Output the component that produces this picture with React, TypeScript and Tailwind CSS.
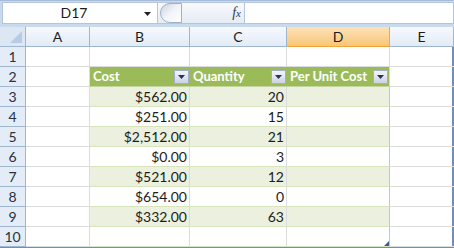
import React from "react";

const cols = ["A", "B", "C", "D", "E"];

const rows: { cost?: string; qty?: string }[] = [
  {},
  {},
  { cost: "$562.00", qty: "20" },
  { cost: "$251.00", qty: "15" },
  { cost: "$2,512.00", qty: "21" },
  { cost: "$0.00", qty: "3" },
  { cost: "$521.00", qty: "12" },
  { cost: "$654.00", qty: "0" },
  { cost: "$332.00", qty: "63" },
  {},
];

function FilterButton() {
  return (
    <span className="ml-auto flex h-[14px] w-[15px] shrink-0 items-center justify-center border border-[#a3aec8] bg-gradient-to-b from-[#f4f5fa] to-[#cdd3e6]">
      <svg width="7" height="4" viewBox="0 0 7 4">
        <path d="M0 0h7L3.5 4z" fill="#2b3450" />
      </svg>
    </span>
  );
}

function HeaderCell({ label, last }: { label: string; last?: boolean }) {
  return (
    <div
      className={
        "flex items-center border-b border-[#c5d4a0] bg-[#9bbb59] pl-[3px] pr-[1px] text-[13px] font-bold text-white " +
        (last ? "border-r border-r-[#d0d7e5]" : "")
      }
    >
      <span className="whitespace-nowrap">{label}</span>
      <FilterButton />
    </div>
  );
}

export default function App() {
  return (
    <div
      className="h-[248px] w-[454px] overflow-hidden bg-white text-[14px] leading-none text-[#1c1c1c]"
      style={{ fontFamily: "Lato, 'Open Sans', sans-serif" }}
    >
      {/* formula bar */}
      <div className="flex h-[27px] items-start border-t border-[#a6bcd8] bg-[#c9d9ee] pt-[1px]">
        <div className="relative ml-[2px] flex h-[22px] w-[156px] items-center justify-center border border-[#b4c6de] bg-white">
          <span className="pr-[12px] text-[14px]">D17</span>
          <svg className="absolute right-[6px] top-[9px]" width="7" height="4" viewBox="0 0 7 4">
            <path d="M0 0h7L3.5 4z" fill="#222" />
          </svg>
        </div>
        <div className="flex h-[22px] w-[86px] items-center border-y border-[#b4c6de] bg-gradient-to-b from-[#f7f9fc] to-[#e6ecf5]">
          <span className="ml-[2px] h-[20px] w-[22px] rounded-l-full border border-[#9fb0c8] bg-gradient-to-br from-[#cfd5dd] via-[#f1f4f8] to-[#ffffff]" />
          <span
            className="ml-auto mr-[3px] text-[14px] italic text-[#2a3a55]"
            style={{ fontFamily: "'Liberation Serif', serif" }}
          >
            f<span className="text-[11px]">x</span>
          </span>
        </div>
        <div className="h-[22px] flex-1 border border-[#b4c6de] bg-white" />
      </div>

      {/* sheet grid */}
      <div className="grid grid-cols-[26px_64px_100px_97px_103px_64px] grid-rows-[20px_repeat(10,20px)] border-b border-r-2 border-[#6f8fbb]">
        {/* select-all corner */}
        <div className="relative border-b border-r border-[#9eb6ce] bg-[#dde7f4]">
          <svg className="absolute bottom-[3px] right-[3px]" width="12" height="12" viewBox="0 0 12 12">
            <path d="M12 0V12H0z" fill="#b9cbe3" />
          </svg>
        </div>
        {cols.map((c) => (
          <div
            key={c}
            className={
              "flex items-center justify-center border-b border-r " +
              (c === "D"
                ? "border-[#f2a53c] border-r-[#9eb6ce] bg-gradient-to-b from-[#fce3b8] to-[#f8c674]"
                : "border-[#9eb6ce] bg-gradient-to-b from-[#f6f9fd] to-[#e2ebf6]")
            }
          >
            {c}
          </div>
        ))}

        {rows.map((r, i) => {
          const n = i + 1;
          const band = n >= 3 && n <= 9 && n % 2 === 1;
          const tbl = n >= 2 && n <= 10;
          const bg = band ? "bg-[#ebf1de]" : "bg-white";
          return (
            <React.Fragment key={n}>
              <div className="flex items-center justify-center border-b border-r border-[#9eb6ce] bg-[#e4ecf7] text-[#27313f]">
                {n}
              </div>
              <div className="border-b border-r border-[#dadcdd]" />
              {n === 2 ? (
                <>
                  <HeaderCell label="Cost" />
                  <HeaderCell label="Quantity" />
                  <HeaderCell label="Per Unit Cost" last />
                </>
              ) : (
                <>
                  <div
                    className={
                      "flex items-center justify-end border-b border-r pr-[2px] " +
                      (tbl ? "border-[#d8e4bc] border-r-[#dadcdd] " + bg : "border-[#dadcdd]")
                    }
                  >
                    {r.cost}
                  </div>
                  <div
                    className={
                      "flex items-center justify-end border-b border-r pr-[2px] " +
                      (tbl ? "border-[#d8e4bc] border-r-[#dadcdd] " + bg : "border-[#dadcdd]")
                    }
                  >
                    {r.qty}
                  </div>
                  <div
                    className={
                      "relative border-b border-r " +
                      (tbl ? "border-[#d8e4bc] border-r-[#c3c9b3] " + bg : "border-[#dadcdd]")
                    }
                  >
                    {n === 10 && (
                      <svg className="absolute bottom-0 right-0" width="5" height="5" viewBox="0 0 5 5">
                        <path d="M5 0V5H0z" fill="#3b5a9a" />
                      </svg>
                    )}
                  </div>
                </>
              )}
              <div className="border-b border-[#dadcdd]" />
            </React.Fragment>
          );
        })}
      </div>
    </div>
  );
}
